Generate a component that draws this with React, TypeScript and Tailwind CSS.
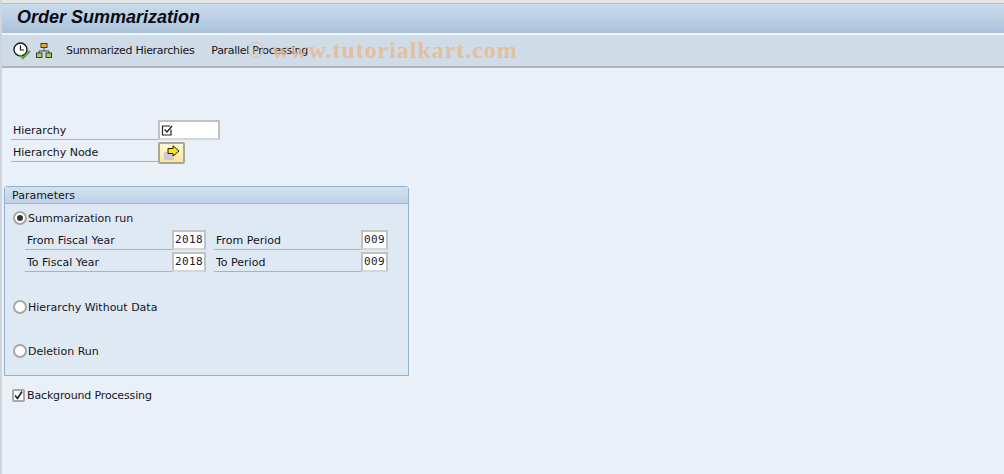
const FF = "font-['DejaVu_Sans','Liberation_Sans',sans-serif]";

function Field({ value, w }: { value: string; w: string }) {
  return (
    <div className={`${w} h-[20px] shrink-0 bg-white border-2 border-[#c0c2c3] border-b-[#d4d6d7] flex items-center justify-center pt-[1px] font-['DejaVu_Sans_Mono','Liberation_Mono',monospace] text-[11px] tracking-[0.4px] text-[#1a1a2a]`}>
      {value}
    </div>
  );
}

function Labeled({ label, w, field, indent = "pl-[2px]" }: { label: string; w: string; field: React.ReactNode; indent?: string }) {
  return (
    <div className="flex">
      <div className={`${w} h-[20px] border-b border-[#adb2b6] ${indent} pt-[4px] text-[11px] leading-[14px]`}>{label}</div>
      {field}
    </div>
  );
}

function Radio({ on, label }: { on?: boolean; label: string }) {
  return (
    <div className="flex items-center h-[14px]">
      <div className="w-[14px] h-[14px] rounded-full border-2 border-[#a8a8a8] bg-white flex items-center justify-center">
        {on && <div className="w-[6px] h-[6px] rounded-full bg-[#33333a]" />}
      </div>
      <span className="ml-[1px] text-[11px] leading-none">{label}</span>
    </div>
  );
}

export default function App() {
  return (
    <div className={`${FF} w-[1004px] h-[474px] overflow-hidden relative bg-[#e9f0f7] text-[#14141e] border-l-2 border-[#cfd5da]`}>
      <div className="h-[4px] bg-[#e4e6e8] border-b border-[#b9c1c8]" />
      <div className="h-[31px] bg-gradient-to-b from-[#cbdcea] to-[#a9c2da] border-b-2 border-[#eef3f8] flex items-center pl-[15px]">
        <span className="font-['Liberation_Sans',sans-serif] italic font-bold text-[18px] leading-none text-[#0a0a14] relative top-[-2px]">Order Summarization</span>
      </div>
      <div className="h-[33px] bg-[#cfdce8] border-b-2 border-[#aab5bf] flex items-center pl-[11px] text-[11px] tracking-[-0.3px] text-[#14141e]">
        <svg width="18" height="18" viewBox="0 0 18 18" className="shrink-0">
          <circle cx="7.5" cy="7.5" r="6.5" fill="#fff" stroke="#1a1a1a" strokeWidth="1.4" />
          <path d="M7.5 3.5V8H11" fill="none" stroke="#1a1a1a" strokeWidth="1.2" />
          <path d="M7 13l3 3 7-7" fill="none" stroke="#5aa62a" strokeWidth="2.2" />
        </svg>
        <svg width="16" height="15" viewBox="0 0 16 15" className="ml-[5px] shrink-0">
          <rect x="5" y="0.5" width="6" height="4" fill="#f3a91c" stroke="#3a3a3a" />
          <path d="M8 5v3M3 10V8h10v2" fill="none" stroke="#444" />
          <rect x="0.5" y="10" width="5.5" height="4.5" fill="#a9cf5a" stroke="#3a3a3a" />
          <rect x="10" y="10" width="5.5" height="4.5" fill="#a9cf5a" stroke="#3a3a3a" />
        </svg>
        <span className="ml-[14px] pt-[2px]">Summarized Hierarchies</span>
        <span className="ml-[17px] pt-[2px]">Parallel Processing</span>
      </div>

      <div className="pt-[52px] pl-[9px]">
        <Labeled label="Hierarchy" w="w-[147px]" field={
          <div className="w-[62px] h-[20px] bg-white border-2 border-[#c0c2c3] border-b-[#d4d6d7] flex items-center pl-[1px]">
            <svg width="13" height="13" viewBox="0 0 13 13">
              <path d="M10 5.5V11H1.5V2H9" fill="none" stroke="#222" strokeWidth="1.2" />
              <path d="M3.5 5.5l2.5 2.5 5-6" fill="none" stroke="#222" strokeWidth="1.3" />
            </svg>
          </div>
        } />
        <div className="mt-[2px]">
          <Labeled label="Hierarchy Node" w="w-[147px]" field={
            <div className="w-[27px] h-[22px] rounded-[2px] border-2 border-[#a9a793] bg-gradient-to-b from-[#fff8d2] to-[#fbe596] flex items-center justify-center">
              <svg width="17" height="16" viewBox="0 0 17 16">
                <rect x="1" y="7" width="10" height="8" fill="#d6c3df" />
                <path d="M5 3.5h5V0.8L16 6l-6 5V8.5H5z" fill="#f7e70f" stroke="#1c1c1c" />
              </svg>
            </div>
          } />
        </div>

        <div className="ml-[-7px] mt-[22px] w-[405px] h-[190px] rounded-t-[3px] border border-[#94b0cc] bg-[#dfe9f3]">
          <div className="h-[17px] bg-gradient-to-b from-[#d3e1ee] to-[#bed3e7] border-b border-[#9cb6d0] pl-[7px] flex items-center text-[11px] leading-none">Parameters</div>
          <div className="pl-[8px] pt-[7px]">
            <Radio on label="Summarization run" />
            <div className="mt-[5px] ml-[12px] flex">
              <Labeled label="From Fiscal Year" w="w-[147px]" field={<Field value="2018" w="w-[34px]" />} />
              <div className="ml-[8px]">
                <Labeled label="From Period" w="w-[147px]" field={<Field value="009" w="w-[27px]" />} />
              </div>
            </div>
            <div className="mt-[2px] ml-[12px] flex">
              <Labeled label="To Fiscal Year" w="w-[147px]" field={<Field value="2018" w="w-[34px]" />} />
              <div className="ml-[8px]">
                <Labeled label="To Period" w="w-[147px]" field={<Field value="009" w="w-[27px]" />} />
              </div>
            </div>
            <div className="mt-[28px]"><Radio label="Hierarchy Without Data" /></div>
            <div className="mt-[30px]"><Radio label="Deletion Run" /></div>
          </div>
        </div>

        <div className="mt-[13px] ml-[1px] flex items-center h-[13px]">
          <div className="w-[13px] h-[13px] rounded-[2px] border-2 border-[#a8a8a8] bg-white flex items-center justify-center">
            <svg width="9" height="9" viewBox="0 0 9 9"><path d="M1 4.5l2.5 3L8 0.5" fill="none" stroke="#1a1a2a" strokeWidth="1.6" /></svg>
          </div>
          <span className="ml-[2px] text-[11px] tracking-[-0.15px] leading-none">Background Processing</span>
        </div>
      </div>

      <div className="absolute left-[246px] top-[38px] flex items-center font-['Liberation_Serif',serif] font-bold text-[24px] leading-none tracking-[0.95px] text-[#e9b98a] opacity-80 pointer-events-none">
        <span className="font-['Liberation_Sans',sans-serif] font-normal text-[13px] mr-[8px] w-[16px] h-[16px] rounded-full border border-[#e9b98a] flex items-center justify-center tracking-normal">c</span>
        www.tutorialkart.com
      </div>
    </div>
  );
}
